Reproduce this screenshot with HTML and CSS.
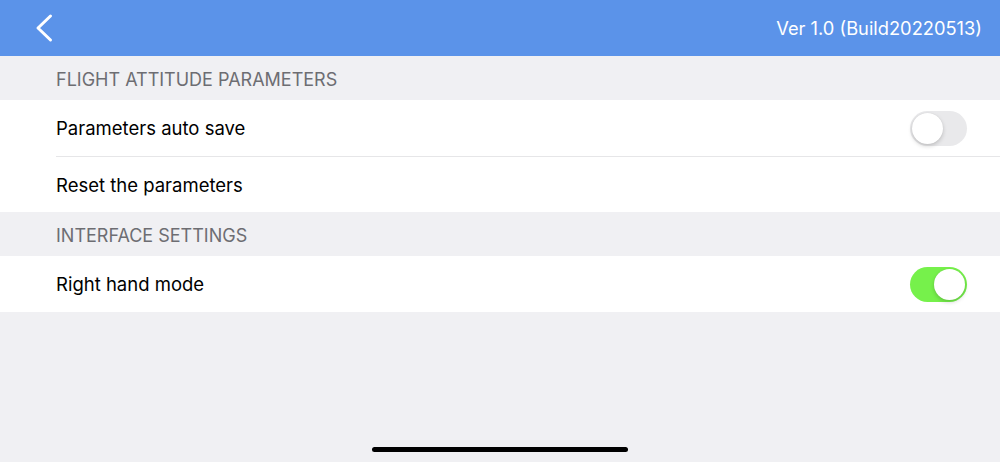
FILE: index.html
```html
<!DOCTYPE html>
<html>
<head>
<meta charset="utf-8">
<link rel="stylesheet" href="styles.css">
</head>
<body>
<div class="screen">
  <header class="topbar">
    <svg class="back" width="22" height="30" viewBox="0 0 22 30"><path d="M17.5 3 L5 15 L17.5 27" fill="none" stroke="#fff" stroke-width="3" stroke-linecap="round" stroke-linejoin="round"/></svg>
    <div class="ver">Ver 1.0 (Build20220513)</div>
  </header>
  <div class="section">FLIGHT ATTITUDE PARAMETERS</div>
  <div class="group">
    <div class="row"><span class="label">Parameters auto save</span><span class="toggle off"><span class="knob"></span></span></div>
    <div class="row"><span class="label">Reset the parameters</span></div>
  </div>
  <div class="section">INTERFACE SETTINGS</div>
  <div class="group">
    <div class="row"><span class="label">Right hand mode</span><span class="toggle on"><span class="knob"></span></span></div>
  </div>
  <div class="spacer"></div>
  <div class="home"><span class="bar"></span></div>
</div>
</body>
</html>
```
FILE: styles.css
```css
* { box-sizing: border-box; }
html, body { margin: 0; padding: 0; }
body { font-family: Inter, "Noto Sans", sans-serif; background: #f0f0f3; }
.screen { width: 1000px; height: 462px; display: flex; flex-direction: column; overflow: hidden; }
.topbar { height: 56px; background: #5b93e9; display: flex; align-items: center; justify-content: space-between; padding: 0 18px 0 33px; flex-shrink: 0; }
.back { display: block; }
.ver { color: #fff; font-size: 18.3px; }
.section { height: 44px; display: flex; align-items: center; padding-left: 56px; color: #6d6d72; font-size: 18px; padding-top: 2px; }
.group { background: #fff; padding-left: 56px; }
.row { height: 56px; display: flex; align-items: center; justify-content: space-between; padding-right: 33px; font-size: 18.5px; color: #000; }
.row + .row { border-top: 1px solid #e6e6e8; }
.toggle { width: 57px; height: 35px; border-radius: 18px; position: relative; display: block; }
.toggle.off { background: #e9e9eb; }
.toggle.on { background: #76f14b; }
.knob { position: absolute; top: 2px; width: 31px; height: 31px; border-radius: 50%; background: #fff; box-shadow: 0 2px 4px rgba(0,0,0,0.18), 0 0 1px rgba(0,0,0,0.1); }
.off .knob { left: 2px; }
.on .knob { right: 2px; }
.spacer { flex: 1; }
.home { height: 21px; display: flex; justify-content: center; align-items: flex-start; padding-top: 6px; flex-shrink: 0; }
.bar { width: 256px; height: 5px; border-radius: 3px; background: #000; }
```
